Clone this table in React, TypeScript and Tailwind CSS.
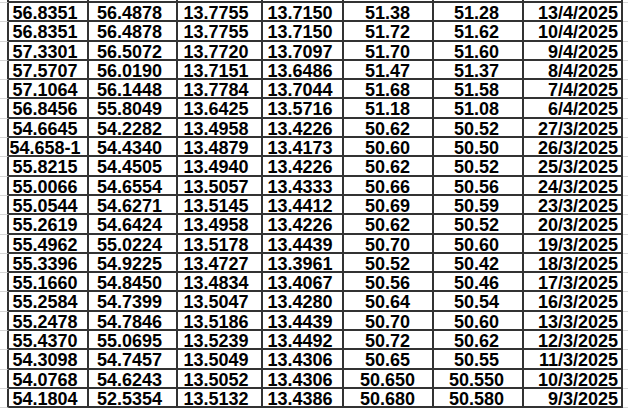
import React from "react";

const rows: string[][] = [
  ["", "", "", "", "", "", ""],
  ["56.8351", "56.4878", "13.7755", "13.7150", "51.38", "51.28", "13/4/2025"],
  ["56.8351", "56.4878", "13.7755", "13.7150", "51.72", "51.62", "10/4/2025"],
  ["57.3301", "56.5072", "13.7720", "13.7097", "51.70", "51.60", "9/4/2025"],
  ["57.5707", "56.0190", "13.7151", "13.6486", "51.47", "51.37", "8/4/2025"],
  ["57.1064", "56.1448", "13.7784", "13.7044", "51.68", "51.58", "7/4/2025"],
  ["56.8456", "55.8049", "13.6425", "13.5716", "51.18", "51.08", "6/4/2025"],
  ["54.6645", "54.2282", "13.4958", "13.4226", "50.62", "50.52", "27/3/2025"],
  ["54.658-1", "54.4340", "13.4879", "13.4173", "50.60", "50.50", "26/3/2025"],
  ["55.8215", "54.4505", "13.4940", "13.4226", "50.62", "50.52", "25/3/2025"],
  ["55.0066", "54.6554", "13.5057", "13.4333", "50.66", "50.56", "24/3/2025"],
  ["55.0544", "54.6271", "13.5145", "13.4412", "50.69", "50.59", "23/3/2025"],
  ["55.2619", "54.6424", "13.4958", "13.4226", "50.62", "50.52", "20/3/2025"],
  ["55.4962", "55.0224", "13.5178", "13.4439", "50.70", "50.60", "19/3/2025"],
  ["55.3396", "54.9225", "13.4727", "13.3961", "50.52", "50.42", "18/3/2025"],
  ["55.1660", "54.8450", "13.4834", "13.4067", "50.56", "50.46", "17/3/2025"],
  ["55.2584", "54.7399", "13.5047", "13.4280", "50.64", "50.54", "16/3/2025"],
  ["55.2478", "54.7846", "13.5186", "13.4439", "50.70", "50.60", "13/3/2025"],
  ["55.4370", "55.0695", "13.5239", "13.4492", "50.72", "50.62", "12/3/2025"],
  ["54.3098", "54.7457", "13.5049", "13.4306", "50.65", "50.55", "11/3/2025"],
  ["54.0768", "54.6243", "13.5052", "13.4306", "50.650", "50.550", "10/3/2025"],
  ["54.1804", "52.5354", "13.5132", "13.4386", "50.680", "50.580", "9/3/2025"],
];

const align = [
  "text-center pr-[6px]",
  "text-center pr-[6px]",
  "text-center pr-[7px]",
  "text-center pr-[5px]",
  "text-center pr-[1px]",
  "text-center pr-[3px]",
  "text-right pr-[3px]",
];

export default function App() {
  return (
    <div
      className="w-[628px] h-[410px] overflow-hidden bg-white text-black"
      style={{ fontFamily: '"Liberation Sans", Arial, sans-serif' }}
    >
      <div className="grid grid-cols-[9px_80px_89px_85px_81px_90px_90px_99px_1fr] auto-rows-[19.3px] mt-[-16.3px]">
        {rows.map((r, i) => (
          <React.Fragment key={i}>
            <div className="border-r-2 border-r-[#333] border-b border-b-[#d6d6d6]" />
            {r.map((c, j) => (
              <div
                key={j}
                className={`border-r-2 border-b-2 border-[#333] font-bold text-[18px] leading-[17px] pt-[2px] whitespace-nowrap ${align[j]}`}
              >
                {c}
              </div>
            ))}
            <div className="border-b border-b-[#d6d6d6]" />
          </React.Fragment>
        ))}
      </div>
    </div>
  );
}
